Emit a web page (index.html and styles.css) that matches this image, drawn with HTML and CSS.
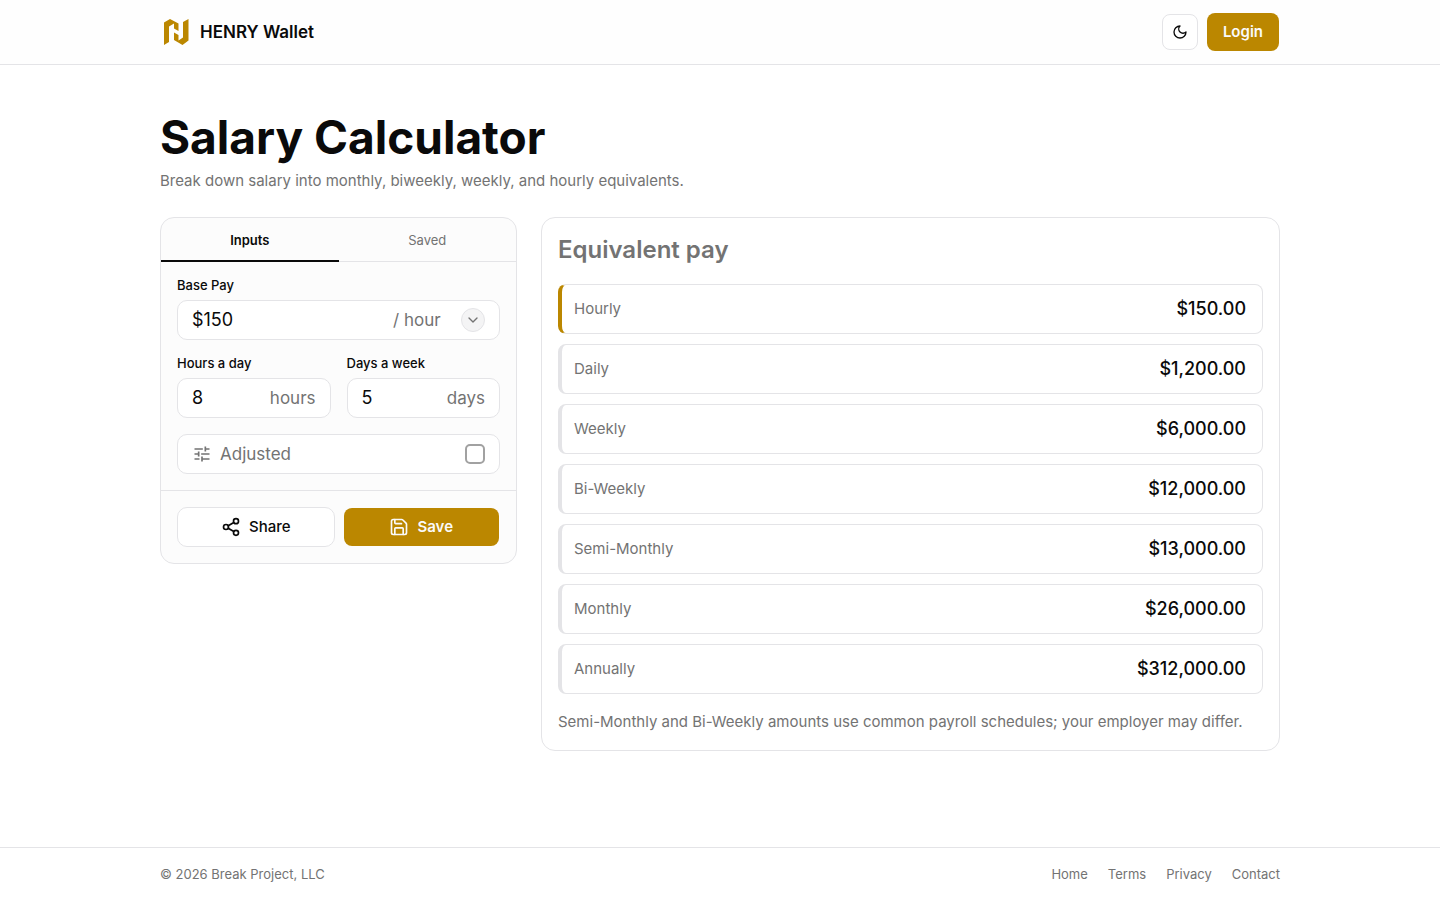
FILE: index.html
```html
<!DOCTYPE html>
<html lang="en">
  <head>
    <meta charset="utf-8">
    <meta name="viewport" content="width=device-width, initial-scale=1">
    <title>Salary Calculator</title>
    <link rel="stylesheet" href="styles.css">
  </head>
  <body>
    <header class="site-header">
      <div class="wrap header-inner">
        <a class="brand" href="#">
          <svg class="brand-logo" width="32" height="32" viewBox="0 0 32 32" fill="#bb8700" aria-hidden="true">
            <path d="M4 6.500 10 3l8.500 4.500V15L14 12.500V7.500L9 10.500V26l-5 3Z"/>
            <path d="M28.500 3v21.500L22.500 29 14 24v-7.500l4.500 2.500v5.500l4.500-3V6Z"/>
          </svg>
          <span>HENRY Wallet</span>
        </a>
        <div class="header-actions">
          <button class="theme-btn" type="button" aria-label="Dark mode">
            <svg width="16" height="16" viewBox="0 0 24 24" fill="none" stroke="currentColor" stroke-width="2" stroke-linecap="round" stroke-linejoin="round"><path d="M12 3a6 6 0 0 0 9 9 9 9 0 1 1-9-9Z"/></svg>
          </button>
          <a class="login-btn" href="#">Login</a>
        </div>
      </div>
    </header>

    <main class="wrap main">
      <h1 class="title">Salary Calculator</h1>
      <p class="subtitle">Break down salary into monthly, biweekly, weekly, and hourly equivalents.</p>

      <div class="columns">
        <form class="card inputs">
          <div class="tabs" role="tablist">
            <button class="tab active" type="button" role="tab" aria-selected="true">Inputs</button>
            <button class="tab" type="button" role="tab" aria-selected="false">Saved</button>
          </div>
          <div class="fields">
            <div class="field">
              <label for="pay">Base Pay</label>
              <div class="control">
                <input id="pay" type="text" value="$150">
                <select class="period" aria-label="Pay period">
                  <option>/ hour</option>
                </select>
                <span class="chevron">
                  <svg width="16" height="16" viewBox="0 0 24 24" fill="none" stroke="currentColor" stroke-width="2" stroke-linecap="round" stroke-linejoin="round"><path d="m6 9 6 6 6-6"/></svg>
                </span>
              </div>
            </div>
            <div class="field-row">
              <div class="field">
                <label for="hours">Hours a day</label>
                <div class="control">
                  <input id="hours" type="text" value="8">
                  <span class="unit">hours</span>
                </div>
              </div>
              <div class="field">
                <label for="days">Days a week</label>
                <div class="control">
                  <input id="days" type="text" value="5">
                  <span class="unit">days</span>
                </div>
              </div>
            </div>
            <label class="control adjusted" for="adjusted">
              <svg width="20" height="20" viewBox="0 0 24 24" fill="currentColor"><path d="M3 17v2h6v-2H3zM3 5v2h10V5H3zm10 16v-2h8v-2h-8v-2h-2v6h2zM7 9v2H3v2h4v2h2V9H7zm14 4v-2H11v2h10zm-6-4h2V7h4V5h-4V3h-2v6z"/></svg>
              <span>Adjusted</span>
              <input class="check" id="adjusted" type="checkbox">
            </label>
          </div>
          <div class="actions">
            <button class="btn share" type="button">
              <svg width="20" height="20" viewBox="0 0 24 24" fill="none" stroke="currentColor" stroke-width="2" stroke-linecap="round" stroke-linejoin="round"><circle cx="18" cy="5" r="3"/><circle cx="6" cy="12" r="3"/><circle cx="18" cy="19" r="3"/><path d="m8.600 13.500 6.800 4M15.400 6.500l-6.800 4"/></svg>
              Share
            </button>
            <button class="btn save" type="button">
              <svg width="20" height="20" viewBox="0 0 24 24" fill="none" stroke="currentColor" stroke-width="2" stroke-linecap="round" stroke-linejoin="round"><path d="M15.200 3a2 2 0 0 1 1.400.6l3.800 3.800a2 2 0 0 1 .6 1.400V19a2 2 0 0 1-2 2H5a2 2 0 0 1-2-2V5a2 2 0 0 1 2-2z"/><path d="M17 21v-7a1 1 0 0 0-1-1H8a1 1 0 0 0-1 1v7M7 3v4a1 1 0 0 0 1 1h7"/></svg>
              Save
            </button>
          </div>
        </form>

        <section class="card results">
          <h2>Equivalent pay</h2>
          <dl class="rows">
            <div class="row current"><dt>Hourly</dt><dd>$150.00</dd></div>
            <div class="row"><dt>Daily</dt><dd>$1,200.00</dd></div>
            <div class="row"><dt>Weekly</dt><dd>$6,000.00</dd></div>
            <div class="row"><dt>Bi-Weekly</dt><dd>$12,000.00</dd></div>
            <div class="row"><dt>Semi-Monthly</dt><dd>$13,000.00</dd></div>
            <div class="row"><dt>Monthly</dt><dd>$26,000.00</dd></div>
            <div class="row"><dt>Annually</dt><dd>$312,000.00</dd></div>
          </dl>
          <p class="note">Semi-Monthly and Bi-Weekly amounts use common payroll schedules; your employer may differ.</p>
        </section>
      </div>
    </main>

    <footer class="site-footer">
      <div class="wrap footer-inner">
        <span>© 2026 Break Project, LLC</span>
        <nav class="footer-nav">
          <a href="#">Home</a>
          <a href="#">Terms</a>
          <a href="#">Privacy</a>
          <a href="#">Contact</a>
        </nav>
      </div>
    </footer>
  </body>
</html>
```
FILE: styles.css
```css
* {
  box-sizing: border-box;
}

body {
  margin: 0;
  min-height: 100vh;
  display: flex;
  flex-direction: column;
  background: #fff;
  color: #0a0a0a;
  font-family: Inter, "Liberation Sans", sans-serif;
  font-size: 15px;
  line-height: 24px;
}

h1, h2, p, dl, dd {
  margin: 0;
}

a {
  color: inherit;
  text-decoration: none;
}

button, input, select {
  font: inherit;
  color: inherit;
}

svg {
  display: block;
  flex: none;
}

.wrap {
  width: 100%;
  max-width: 1152px;
  margin: 0 auto;
  padding: 0 16px;
}

.site-header {
  border-bottom: 1px solid #e4e4e7;
  background: #fefefe;
}

.header-inner {
  display: flex;
  align-items: center;
  justify-content: space-between;
  height: 64px;
}

.brand {
  display: flex;
  align-items: center;
  gap: 8px;
  font-size: 17px;
  font-weight: 600;
}

.header-actions {
  display: flex;
  align-items: center;
  gap: 9px;
}

.theme-btn {
  display: flex;
  align-items: center;
  justify-content: center;
  width: 36px;
  height: 36px;
  padding: 0;
  border: 1px solid #e4e4e7;
  border-radius: 8px;
  background: #fff;
}

.login-btn {
  margin-right: 1px;
  padding: 7px 16px;
  border-radius: 8px;
  background: #bb8700;
  color: #fafafa;
  font-weight: 600;
}

.main {
  flex: 1;
  padding-top: 48px;
  padding-bottom: 48px;
}

.title {
  font-size: 46px;
  line-height: 48px;
  font-weight: 700;
}

.subtitle {
  margin-top: 8px;
  color: #737373;
}

.columns {
  display: grid;
  grid-template-columns: 357px 1fr;
  align-items: start;
  gap: 24px;
  margin-top: 24px;
}

.card {
  border: 1px solid #e4e4e7;
  border-radius: 14px;
}

.inputs {
  overflow: hidden;
  background: #fcfcfc;
}

.tabs {
  display: flex;
  border-bottom: 1px solid #e4e4e7;
}

.tab {
  flex: 1;
  height: 44px;
  margin-bottom: -1px;
  padding: 2px 0 0;
  border: 0;
  border-bottom: 2px solid transparent;
  background: none;
  color: #737373;
  font-size: 13px;
}

.tab.active {
  border-color: #0a0a0a;
  color: #0a0a0a;
  font-weight: 600;
}

.fields {
  display: grid;
  gap: 16px;
  padding: 16px;
}

.field {
  display: grid;
  gap: 8px;
  min-width: 0;
  font-size: 13px;
  font-weight: 500;
  line-height: 14px;
}

.field-row {
  display: grid;
  grid-template-columns: 1fr 1fr;
  gap: 16px;
}

.control {
  display: flex;
  align-items: center;
  height: 40px;
  padding: 0 14px;
  border: 1px solid #e4e4e7;
  border-radius: 10px;
  background: #fff;
  font-size: 17px;
  font-weight: 400;
  line-height: 24px;
}

.control input[type="text"] {
  flex: 1;
  width: 0;
  min-width: 0;
  padding: 0;
  border: 0;
  outline: 0;
  background: none;
  font-size: 18px;
}

.period {
  appearance: none;
  padding: 0;
  border: 0;
  background: none;
  color: #737373;
}

.unit {
  color: #737373;
}

.chevron {
  display: flex;
  align-items: center;
  justify-content: center;
  width: 24px;
  height: 24px;
  margin-left: 20px;
  border: 1px solid #e4e4e7;
  border-radius: 50%;
  background: #f4f4f5;
  color: #737373;
}

.adjusted {
  gap: 8px;
  color: #737373;
}

.check {
  appearance: none;
  width: 20px;
  height: 20px;
  margin: 0 0 0 auto;
  border: 2px solid #a1a1a1;
  border-radius: 5px;
  background: #fff;
}

.actions {
  display: flex;
  align-items: center;
  gap: 9px;
  padding: 16px 17px 16px 16px;
  border-top: 1px solid #e4e4e7;
}

.btn {
  display: flex;
  flex: 1;
  align-items: center;
  justify-content: center;
  gap: 8px;
  height: 38px;
  padding: 0;
  border: 0;
  border-radius: 8px;
  font-weight: 500;
}

.share {
  height: 40px;
  border: 1px solid #e4e4e7;
  border-radius: 10px;
  background: #fff;
}

.save {
  background: #bb8700;
  color: #fafafa;
  font-weight: 600;
}

.results {
  padding: 16px;
}

.results h2 {
  color: #737373;
  font-size: 24px;
  font-weight: 600;
  line-height: 32px;
}

.rows {
  display: grid;
  gap: 10px;
  margin-top: 18px;
}

.row {
  display: flex;
  align-items: center;
  justify-content: space-between;
  height: 50px;
  padding: 0 16px 0 12px;
  border: 1px solid #e4e4e7;
  border-left-width: 4px;
  border-radius: 8px;
}

.row.current {
  border-left-color: #bb8700;
}

.row dt {
  color: #737373;
}

.row dd {
  font-size: 18px;
  font-weight: 500;
}

.note {
  margin-top: 16px;
  color: #737373;
}

.site-footer {
  border-top: 1px solid #e4e4e7;
  color: #737373;
  font-size: 13px;
  line-height: 20px;
}

.footer-inner {
  display: flex;
  align-items: center;
  justify-content: space-between;
  padding-top: 16px;
  padding-bottom: 16px;
}

.footer-nav {
  display: flex;
  gap: 20px;
}
```
